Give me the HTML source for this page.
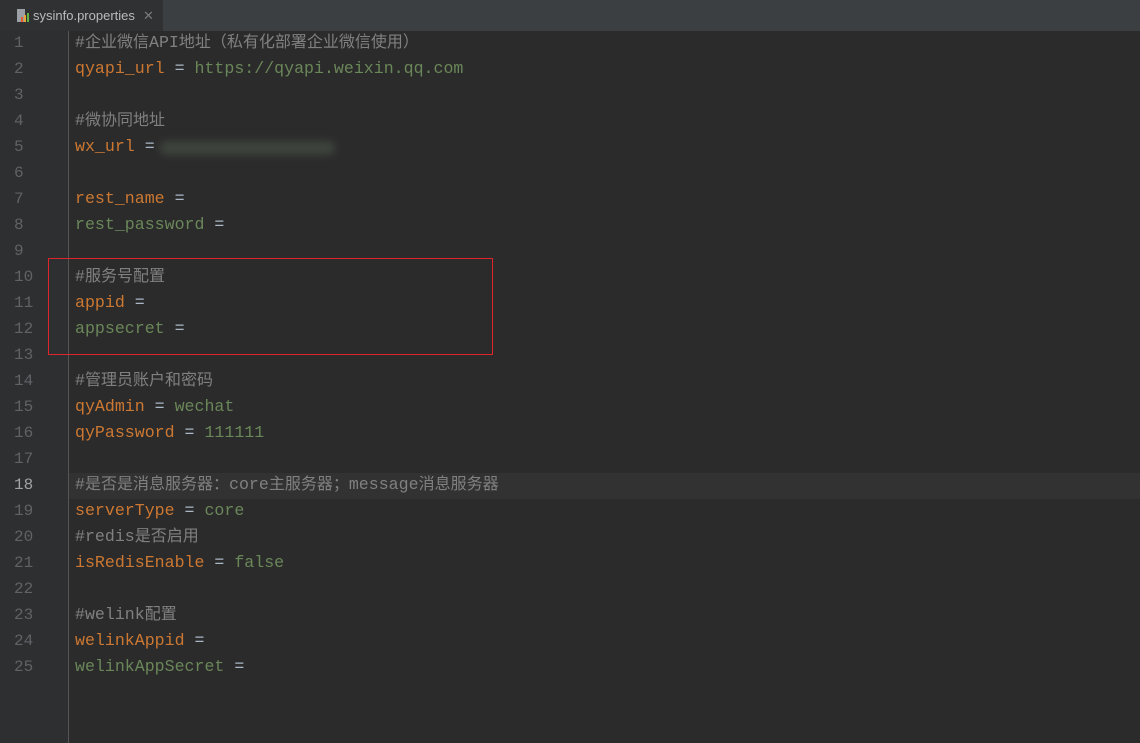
<!DOCTYPE html>
<html><head><meta charset="utf-8"><style>
html,body{margin:0;padding:0;width:1140px;height:743px;overflow:hidden;background:#2b2b2b;font-family:"Liberation Mono","Noto Sans CJK SC",monospace;}
.tabbar{position:absolute;left:0;top:0;width:1140px;height:31px;background:#3c3f41;}
.tab{position:absolute;left:0;top:0;width:163px;height:31px;background:#2f3133;color:#bbbbbb;font:13px "Liberation Sans",sans-serif;line-height:31px;}
.tab span{position:absolute;left:33px;}
.tab .x{left:143px;color:#7a7a7a;}
.gutter{position:absolute;left:0;top:31px;width:68px;height:712px;background:#2d2f31;border-right:1px solid #555;}
.hl{position:absolute;left:69px;top:473px;width:1071px;height:26px;background:#323232;}
.ln{position:absolute;left:14px;color:#606366;font-size:16px;line-height:26px;}
.code{position:absolute;left:75px;font-size:16.6px;line-height:26px;white-space:pre;color:#a9b7c6;}
.cj{font-size:16px;}
.k{color:#cc7832}.v{color:#6a8759}.c{color:#808080}.e{color:#a9b7c6}
.box{position:absolute;left:48px;top:258px;width:443px;height:95px;border:1.5px solid #e0242b;}
.blur{position:absolute;left:160px;top:141px;width:175px;height:14px;background:#4a5548;filter:blur(4px);border-radius:6px;opacity:.6;}
</style></head><body>
<div class="tabbar"><div class="tab">
<svg style="position:absolute;left:16px;top:8px" width="14" height="15"><rect x="1" y="1" width="8" height="13" fill="#9aa0a6"/><rect x="5" y="9" width="2" height="5" fill="#e05a2b"/><rect x="8" y="7" width="2" height="7" fill="#e8a33b"/><rect x="11" y="5" width="2" height="9" fill="#62b543"/></svg>
<span>sysinfo.properties</span><span class="x">✕</span></div></div>
<div class="gutter"></div>
<div class="hl"></div>
<div id="lines"></div>
<div class="blur"></div>
<div class="box"></div>
<script>
var L=[
'<span class="c">#企业微信API地址（私有化部署企业微信使用）</span>',
'<span class="k">qyapi_url</span> = <span class="v">https://qyapi.weixin.qq.com</span>',
'',
'<span class="c">#微协同地址</span>',
'<span class="k">wx_url</span> = ',
'',
'<span class="k">rest_name</span> = ',
'<span class="v">rest_password</span> = ',
'',
'<span class="c">#服务号配置</span>',
'<span class="k">appid</span> = ',
'<span class="v">appsecret</span> = ',
'',
'<span class="c">#管理员账户和密码</span>',
'<span class="k">qyAdmin</span> = <span class="v">wechat</span>',
'<span class="k">qyPassword</span> = <span class="v">111111</span>',
'',
'<span class="c">#是否是消息服务器：core主服务器；message消息服务器</span>',
'<span class="k">serverType</span> = <span class="v">core</span>',
'<span class="c">#redis是否启用</span>',
'<span class="k">isRedisEnable</span> = <span class="v">false</span>',
'',
'<span class="c">#welink配置</span>',
'<span class="k">welinkAppid</span> = ',
'<span class="v">welinkAppSecret</span> = '];
var h='';
for(var i=0;i<L.length;i++){var t=30+i*26;
var s=L[i].replace(/([\u3000-\u9fff\uff00-\uffef]+)/g,'<span class="cj">$1</span>');
h+='<div class="ln" style="top:'+t+'px;'+(i==17?'color:#a4a3a3':'')+'">'+(i+1)+'</div>';
h+='<div class="code" style="top:'+t+'px">'+s+'</div>';}
document.getElementById('lines').innerHTML=h;
</script>
</body></html>
